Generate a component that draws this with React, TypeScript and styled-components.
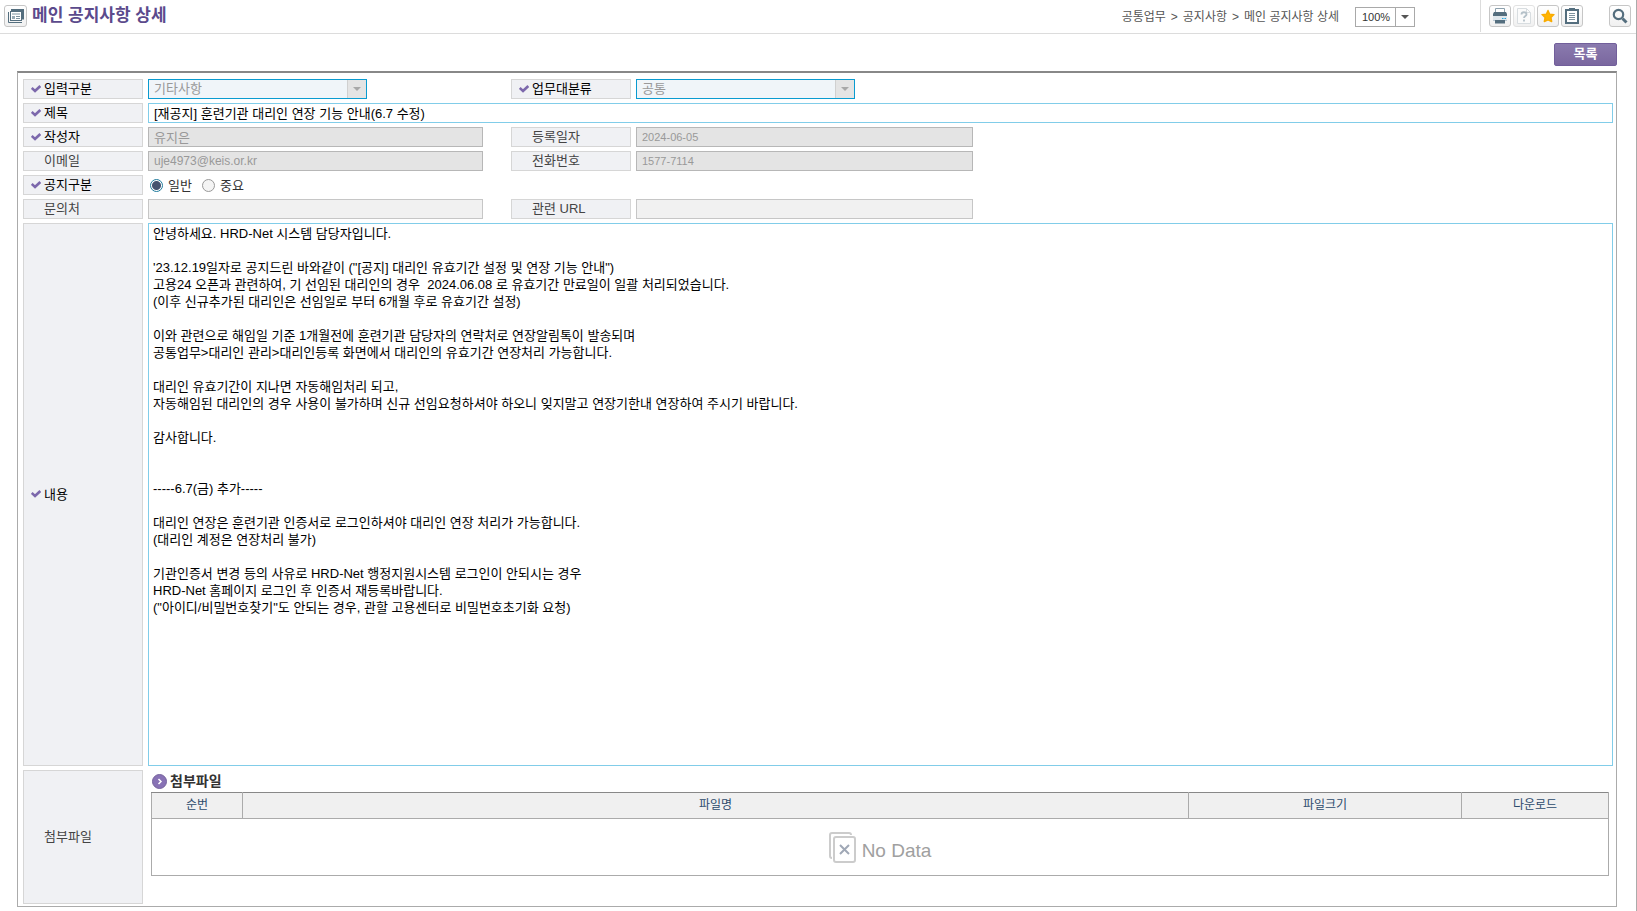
import React from "react";
import styled, { createGlobalStyle, css } from "styled-components";

const GlobalStyle = createGlobalStyle`
  *, *::before, *::after { box-sizing: border-box; }
  html, body, #root { height: 100%; }
  body { margin: 0; background: #fff; }
  body, button, input, select, textarea {
    font-family: "Liberation Sans", "Noto Sans CJK KR", sans-serif;
    font-size: 13px;
    line-height: 17px;
  }
`;

const Page = styled.div`
  display: flex;
  flex-direction: column;
  min-height: 100%;
  padding-bottom: 4px;
  border-right: 1px solid #ababab;
`;

const Header = styled.header`
  display: flex;
  align-items: center;
  height: 34px;
  padding: 0 5px 1px 4px;
  border-bottom: 1px solid #dcdcdc;
`;

const iconBox = css`
  display: flex;
  align-items: center;
  justify-content: center;
  width: 22px;
  height: 22px;
  padding: 0;
  border: 1px solid #c6c6c6;
  border-radius: 3px;
  background: linear-gradient(#fff, #f0f0f0);
`;

const TitleIcon = styled.span`
  ${iconBox}
  width: 23px;
`;

const ToolButton = styled.button<{ $faded?: boolean }>`
  ${iconBox}
  border-color: ${(p) => (p.$faded ? "#e2e2e2" : "#c6c6c6")};
`;

const Title = styled.h1`
  flex: 1;
  margin: 0 0 0 5px;
  font-size: 17px;
  line-height: 22px;
  font-weight: 700;
  color: #5b4a8c;
`;

const Location = styled.div`
  display: flex;
  align-items: center;
  gap: 16px;
  margin-right: 65px;
  padding-top: 2px;
`;

const Breadcrumb = styled.nav`
  display: flex;
  gap: 5px;
  font-size: 12px;
  color: #555;
  a { color: inherit; text-decoration: none; }
`;

const ZoomBox = styled.span`
  display: flex;
  width: 60px;
  height: 20px;
  border: 1px solid #a9a9a9;
`;

const ZoomSelect = styled.select`
  appearance: none;
  flex: 1;
  min-width: 0;
  padding: 0 0 0 6px;
  border: 0;
  background: #fff;
  font-size: 11px;
  color: #333;
`;

const Arrow = styled.span<{ $muted?: boolean }>`
  display: flex;
  align-items: center;
  justify-content: center;
  width: 19px;
  border-left: 1px solid ${(p) => (p.$muted ? "#d0d0d0" : "#a9a9a9")};
  background: ${(p) => (p.$muted ? "#e4e4e4" : "#fff")};
  color: ${(p) => (p.$muted ? "#a8a8a8" : "#555")};
`;

const Tools = styled.div`
  display: flex;
  align-items: center;
  gap: 2px;
  height: 32px;
  padding-left: 8px;
  border-left: 1px solid #dcdcdc;
`;

const SearchSlot = styled.div`
  margin-left: 24px;
`;

const Main = styled.main`
  display: flex;
  flex-direction: column;
  flex: 1;
  padding: 9px 19px 0 17px;
`;

const Actions = styled.div`
  display: flex;
  justify-content: flex-end;
  margin-bottom: 5px;
`;

const ListButton = styled.button`
  width: 63px;
  height: 23px;
  padding: 0 0 2px;
  border: 1px solid #725f9b;
  border-radius: 2px;
  background: linear-gradient(#8a7aae, #7a679f);
  color: #fff;
  font-weight: 700;
`;

const Form = styled.form`
  display: flex;
  flex-direction: column;
  flex: 1;
  gap: 4px;
  padding: 6px 3px 2px 5px;
  border: 1px solid #ababab;
  border-top: 2px solid #888;
`;

const Row = styled.div<{ $grow?: boolean }>`
  display: flex;
  min-height: 20px;
  flex: ${(p) => (p.$grow ? "1 0 auto" : "none")};
`;

const Half = styled.div<{ $first?: boolean }>`
  display: flex;
  width: ${(p) => (p.$first ? "488px" : "462px")};
`;

const labelBox = css`
  display: flex;
  align-items: center;
  flex: none;
  width: 120px;
  margin-right: 5px;
  padding: 0 0 1px 7px;
  border: 1px solid #d6d6d6;
  background: #f0f1f4;
`;

const LabelBox = styled.label<{ $required?: boolean }>`
  ${labelBox}
  color: ${(p) => (p.$required ? "#000" : "#444")};
`;

const Mark = styled.span`
  display: flex;
  width: 13px;
`;

const Field = styled.input<{ $state: "readonly" | "empty" | "active" }>`
  width: ${(p) => (p.$state === "active" ? "auto" : "335px")};
  flex: ${(p) => (p.$state === "active" ? "1" : "none")};
  height: 20px;
  padding: 0 5px 2px;
  outline: 0;
  border: 1px solid
    ${(p) => ({ readonly: "#b7b7b7", empty: "#c6c6c6", active: "#81cde9" })[p.$state]};
  background: ${(p) => ({ readonly: "#e4e4e4", empty: "#f1f1f1", active: "#fff" })[p.$state]};
  color: ${(p) => (p.$state === "active" ? "#000" : "#999")};
`;

const SmallField = styled(Field)`
  width: 337px;
  padding-bottom: 0;
  font-size: 11px;
`;

const EmailField = styled(Field)`
  padding-bottom: 0;
  font-size: 12px;
`;

const Combo = styled.span`
  display: flex;
  width: 219px;
  height: 20px;
  border: 1px solid #0a9bd0;
`;

const ComboSelect = styled.select`
  appearance: none;
  flex: 1;
  min-width: 0;
  padding: 0 5px 1px;
  border: 0;
  background: #f0f5f9;
  color: #999;
  opacity: 1;
`;

const Radios = styled.div`
  display: flex;
  align-items: center;
  gap: 10px;
  padding-left: 2px;
`;

const RadioLabel = styled.label`
  display: flex;
  align-items: center;
  gap: 5px;
  color: #333;
`;

const Radio = styled.input`
  appearance: none;
  width: 13px;
  height: 13px;
  margin: 0;
  border: 1px solid #999;
  border-radius: 50%;
  background: #f4f4f4;
  &:checked {
    border-color: #1f7a9c;
    background: radial-gradient(circle, #46536f 0 4px, #fff 5px);
  }
`;

const Content = styled.textarea`
  flex: 1;
  height: 543px;
  min-height: 100%;
  padding: 1px 4px;
  resize: none;
  outline: 0;
  border: 1px solid #81cde9;
  color: #000;
`;

const AttachLabel = styled.div`
  ${labelBox}
  color: #444;
`;

const Attachments = styled.section`
  flex: 1;
  min-height: 134px;
  padding: 3px 4px 0 3px;
`;

const AttachTitle = styled.h2`
  display: flex;
  align-items: center;
  gap: 3px;
  margin: 0 0 2px 1px;
  font-size: 14px;
  line-height: 17px;
  font-weight: 700;
  color: #333;
`;

const Table = styled.table`
  width: 100%;
  table-layout: fixed;
  border-collapse: collapse;
  border: 1px solid #ababab;
  border-top-color: #888;
`;

const Th = styled.th<{ $width?: number }>`
  width: ${(p) => (p.$width ? `${p.$width}px` : "auto")};
  height: 26px;
  padding: 0;
  border: 1px solid #ababab;
  border-top-color: #888;
  background: #f0f0f0;
  color: #2c4a6c;
  font-size: 12px;
  font-weight: 400;
`;

const EmptyCell = styled.td`
  height: 57px;
  padding: 0;
`;

const NoData = styled.div`
  display: flex;
  align-items: flex-end;
  justify-content: center;
  gap: 6px;
  font-size: 19px;
  line-height: 24px;
  color: #a0a0a0;
`;

const Caret = () => (
  <svg width="8" height="4" viewBox="0 0 8 4" aria-hidden="true">
    <path d="M0 0h8L4 4z" fill="currentColor" />
  </svg>
);

const Check = () => (
  <svg width="10" height="8" viewBox="0 0 10 8" aria-hidden="true">
    <path d="M.7 3L4 6l5.300-5" fill="none" stroke="#7c68ac" strokeWidth="2.600" />
  </svg>
);

const WindowIcon = () => (
  <svg width="16" height="14" viewBox="0 0 16 14" aria-hidden="true">
    <path d="M3 1h12v9.500" fill="none" stroke="#546e7e" strokeWidth="2" />
    <rect x="2.500" y="2.500" width="11" height="9" fill="#fff" stroke="#546e7e" />
    <path d="M.5 3v10.500H14" fill="none" stroke="#546e7e" />
    <path d="M4 5h8M8 7.500h4M8 9.500h4" stroke="#7d929e" />
    <path d="M4 7h3v3H4z" fill="#9aabb5" />
  </svg>
);

const PrinterIcon = () => (
  <svg width="14" height="16" viewBox="0 0 14 16" aria-hidden="true">
    <path d="M2.500 5V.5h9V5" fill="#fff" stroke="#8ca0ad" />
    <path d="M1 4h12l1 2v2H0V6z" fill="#546e7e" />
    <path d="M0 8h14v5H0z" fill="#dfe7ec" />
    <path d="M0 12h14v1H0z" fill="#b9c8d2" />
    <path d="M2 12h10v3.500H2z" fill="#546e7e" />
    <path d="M9 10.500h1.500M11.500 10.500H13" stroke="#24a7e0" />
  </svg>
);

const HelpIcon = () => (
  <svg width="14" height="16" viewBox="0 0 14 16" aria-hidden="true">
    <path d="M.5.5h9l4 4v11H.5z" fill="#fbfbfb" stroke="#d8dde0" />
    <path d="M9.500.5v4h4" fill="none" stroke="#d8dde0" />
    <path d="M4.500 6.500c0-3 5-3 5 0 0 1.500-2.500 1.500-2.500 3.500M7 11.500v2" fill="none" stroke="#b4c0c8" strokeWidth="1.800" />
  </svg>
);

const StarIcon = () => (
  <svg width="14" height="14" viewBox="0 0 14 14" aria-hidden="true">
    <path d="M7 1.500l1.600 3.600 4.400.5-3.100 2.900.8 4L7 10.800l-3.700 1.700.8-4L1 5.600l4.400-.5z" fill="#ffb400" stroke="#f9ab00" strokeWidth="1.400" strokeLinejoin="round" />
  </svg>
);

const ClipboardIcon = () => (
  <svg width="14" height="16" viewBox="0 0 14 16" aria-hidden="true">
    <rect x="1" y="2" width="12" height="13" fill="#fff" stroke="#546e7e" strokeWidth="2" />
    <path d="M4 0h6v3H4z" fill="#546e7e" />
    <path d="M4 5.500h6M4 7.500h6M4 9.500h6M4 11.500h6" stroke="#7d929e" />
  </svg>
);

const SearchIcon = () => (
  <svg width="16" height="16" viewBox="0 0 16 16" aria-hidden="true">
    <circle cx="6.500" cy="6.500" r="4.700" fill="none" stroke="#546e7e" strokeWidth="2.200" />
    <path d="M10.500 10.500l4 4" stroke="#546e7e" strokeWidth="3" />
  </svg>
);

const BulletIcon = () => (
  <svg width="15" height="15" viewBox="0 0 15 15" aria-hidden="true">
    <circle cx="7.500" cy="7.500" r="7" fill="#8872b5" stroke="#75629c" />
    <path d="M6.500 5l2.500 2.500L6.500 10" fill="none" stroke="#fff" strokeWidth="1.500" />
  </svg>
);

const NoDataIcon = () => (
  <svg width="27" height="31" viewBox="0 0 27 31" aria-hidden="true">
    <path d="M3 26Q1 26 1 24V3q0-2 2-2h17q2 0 2 2" fill="none" stroke="#ccc" strokeWidth="2" />
    <rect x="5" y="5" width="21" height="25" rx="2" fill="#fff" stroke="#ccc" strokeWidth="2" />
    <path d="M11 13l9 9M20 13l-9 9" stroke="#a0a8b6" strokeWidth="2" />
  </svg>
);

const Label = ({ id, text, required }: { id?: string; text: string; required?: boolean }) => (
  <LabelBox htmlFor={id} $required={required}>
    <Mark>{required && <Check />}</Mark>
    {text}
  </LabelBox>
);

const ComboField = ({ id, value }: { id: string; value: string }) => (
  <Combo>
    <ComboSelect id={id} disabled defaultValue={value}>
      <option>{value}</option>
    </ComboSelect>
    <Arrow $muted><Caret /></Arrow>
  </Combo>
);

const notice = `안녕하세요. HRD-Net 시스템 담당자입니다.

'23.12.19일자로 공지드린 바와같이 ("[공지] 대리인 유효기간 설정 및 연장 기능 안내")
고용24 오픈과 관련하여, 기 선임된 대리인의 경우  2024.06.08 로 유효기간 만료일이 일괄 처리되었습니다.
(이후 신규추가된 대리인은 선임일로 부터 6개월 후로 유효기간 설정)

이와 관련으로 해임일 기준 1개월전에 훈련기관 담당자의 연락처로 연장알림톡이 발송되며
공통업무>대리인 관리>대리인등록 화면에서 대리인의 유효기간 연장처리 가능합니다.

대리인 유효기간이 지나면 자동해임처리 되고,
자동해임된 대리인의 경우 사용이 불가하며 신규 선임요청하셔야 하오니 잊지말고 연장기한내 연장하여 주시기 바랍니다.

감사합니다.


-----6.7(금) 추가-----

대리인 연장은 훈련기관 인증서로 로그인하셔야 대리인 연장 처리가 가능합니다.
(대리인 계정은 연장처리 불가)

기관인증서 변경 등의 사유로 HRD-Net 행정지원시스템 로그인이 안되시는 경우
HRD-Net 홈페이지 로그인 후 인증서 재등록바랍니다.
("아이디/비밀번호찾기"도 안되는 경우, 관할 고용센터로 비밀번호초기화 요청)`;

export default function App() {
  return (
    <Page>
      <GlobalStyle />
      <Header>
        <TitleIcon><WindowIcon /></TitleIcon>
        <Title>메인 공지사항 상세</Title>
        <Location>
          <Breadcrumb>
            <a href="#common">공통업무</a>
            <span>&gt;</span>
            <a href="#notice">공지사항</a>
            <span>&gt;</span>
            <span>메인 공지사항 상세</span>
          </Breadcrumb>
          <ZoomBox>
            <ZoomSelect aria-label="화면 배율" defaultValue="100%">
              <option>100%</option>
            </ZoomSelect>
            <Arrow><Caret /></Arrow>
          </ZoomBox>
        </Location>
        <Tools>
          <ToolButton aria-label="인쇄"><PrinterIcon /></ToolButton>
          <ToolButton aria-label="도움말" $faded><HelpIcon /></ToolButton>
          <ToolButton aria-label="즐겨찾기"><StarIcon /></ToolButton>
          <ToolButton aria-label="클립보드"><ClipboardIcon /></ToolButton>
          <SearchSlot>
            <ToolButton aria-label="검색"><SearchIcon /></ToolButton>
          </SearchSlot>
        </Tools>
      </Header>
      <Main>
        <Actions>
          <ListButton type="button">목록</ListButton>
        </Actions>
        <Form>
          <Row>
            <Half $first>
              <Label id="type" text="입력구분" required />
              <ComboField id="type" value="기타사항" />
            </Half>
            <Half>
              <Label id="category" text="업무대분류" required />
              <ComboField id="category" value="공통" />
            </Half>
          </Row>
          <Row>
            <Label id="subject" text="제목" required />
            <Field id="subject" $state="active" defaultValue="[재공지] 훈련기관 대리인 연장 기능 안내(6.7 수정)" />
          </Row>
          <Row>
            <Half $first>
              <Label id="writer" text="작성자" required />
              <Field id="writer" $state="readonly" readOnly value="유지은" />
            </Half>
            <Half>
              <Label id="date" text="등록일자" />
              <SmallField id="date" $state="readonly" readOnly value="2024-06-05" />
            </Half>
          </Row>
          <Row>
            <Half $first>
              <Label id="email" text="이메일" />
              <EmailField id="email" $state="readonly" readOnly value="uje4973@keis.or.kr" />
            </Half>
            <Half>
              <Label id="phone" text="전화번호" />
              <SmallField id="phone" $state="readonly" readOnly value="1577-7114" />
            </Half>
          </Row>
          <Row>
            <Label id="normal" text="공지구분" required />
            <Radios>
              <RadioLabel><Radio type="radio" name="kind" id="normal" defaultChecked />일반</RadioLabel>
              <RadioLabel><Radio type="radio" name="kind" />중요</RadioLabel>
            </Radios>
          </Row>
          <Row>
            <Half $first>
              <Label id="contact" text="문의처" />
              <Field id="contact" $state="empty" readOnly />
            </Half>
            <Half>
              <Label id="url" text="관련 URL" />
              <SmallField id="url" $state="empty" readOnly />
            </Half>
          </Row>
          <Row $grow>
            <Label id="content" text="내용" required />
            <Content id="content" defaultValue={notice} spellCheck={false} />
          </Row>
          <Row>
            <AttachLabel><Mark />첨부파일</AttachLabel>
            <Attachments>
              <AttachTitle><BulletIcon />첨부파일</AttachTitle>
              <Table>
                <thead>
                  <tr>
                    <Th $width={91}>순번</Th>
                    <Th>파일명</Th>
                    <Th $width={273}>파일크기</Th>
                    <Th $width={147}>다운로드</Th>
                  </tr>
                </thead>
                <tbody>
                  <tr>
                    <EmptyCell colSpan={4}>
                      <NoData><NoDataIcon />No Data</NoData>
                    </EmptyCell>
                  </tr>
                </tbody>
              </Table>
            </Attachments>
          </Row>
        </Form>
      </Main>
    </Page>
  );
}
